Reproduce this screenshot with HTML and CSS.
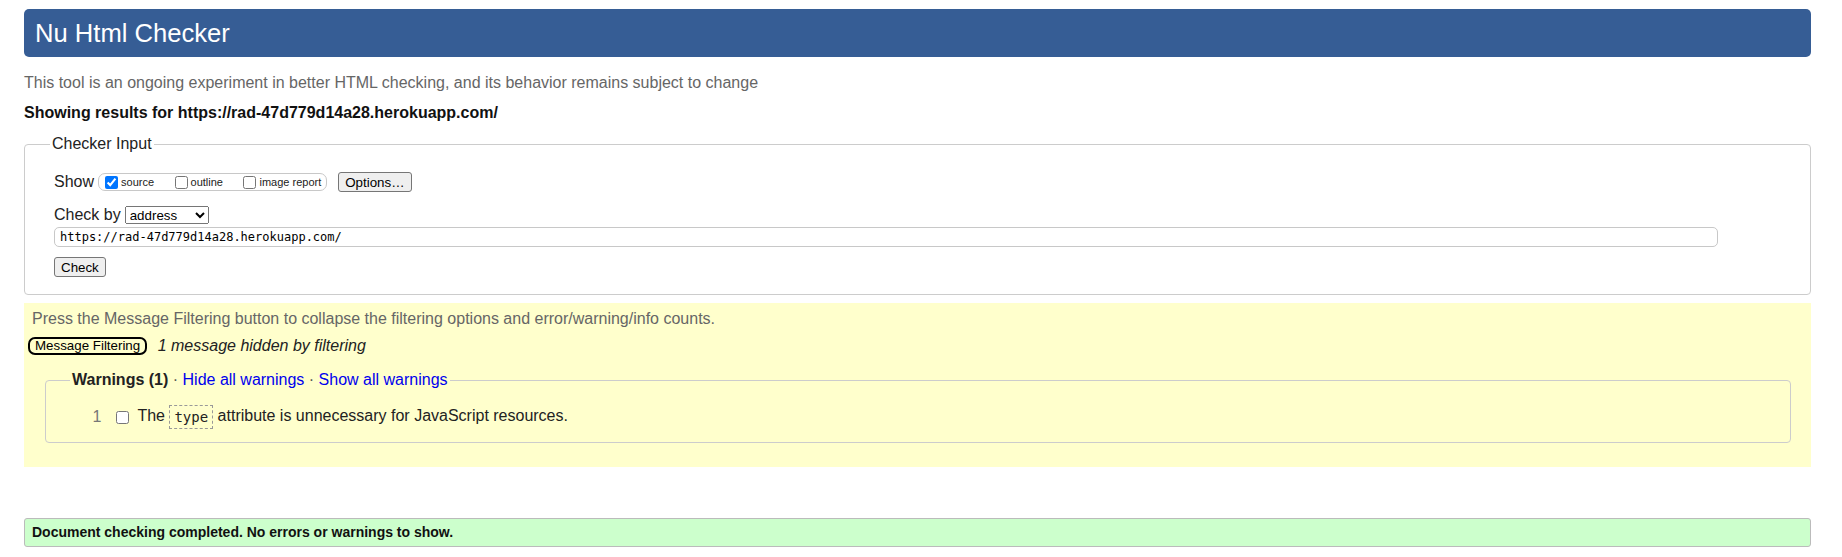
FILE: index.html
```html
<!DOCTYPE html>
<html lang="en">
<head>
<meta charset="utf-8">
<title>Nu Html Checker</title>
<link rel="stylesheet" href="styles.css">
</head>
<body>
<h1 class="title">Nu Html Checker</h1>
<p class="subtitle">This tool is an ongoing experiment in better HTML checking, and its behavior remains subject to change</p>
<p class="showing">Showing results for https://rad-47d779d14a28.herokuapp.com/</p>
<form class="checker">
  <fieldset class="input-box">
    <legend class="input-legend">Checker Input</legend>
    <div class="row row-show">
      <span class="lbl">Show</span>
      <span class="opts">
        <label class="opt"><input class="cb" type="checkbox" checked>source</label>
        <label class="opt opt-gap"><input class="cb" type="checkbox">outline</label>
        <label class="opt opt-gap"><input class="cb" type="checkbox">image report</label>
      </span>
      <button type="button" class="btn btn-options">Options…</button>
    </div>
    <div class="row row-by">
      <span class="lbl">Check by</span>
      <select class="sel"><option>address</option><option>file upload</option><option>text input</option></select>
    </div>
    <div class="row row-url"><input class="url" type="text" value="https://rad-47d779d14a28.herokuapp.com/"></div>
    <div class="row row-check"><button class="btn" type="button">Check</button></div>
  </fieldset>
</form>
<section class="filters">
  <p class="filter-note">Press the Message Filtering button to collapse the filtering options and error/warning/info counts.</p>
  <div class="filter-row"><button type="button" class="btn-filter">Message Filtering</button><em class="hidden-note">1 message hidden by filtering</em></div>
  <fieldset class="warn-box">
    <legend class="warn-legend"><strong>Warnings (1)</strong> <span class="dot">·</span> <a class="lnk" href="#">Hide all warnings</a> <span class="dot">·</span> <a class="lnk" href="#">Show all warnings</a></legend>
    <div class="msg"><span class="num">1</span><input class="cb" type="checkbox"><span class="msg-text">The <code class="code">type</code> attribute is unnecessary for JavaScript resources.</span></div>
  </fieldset>
</section>
<p class="done">Document checking completed. No errors or warnings to show.</p>
</body>
</html>
```
FILE: styles.css
```css
html { background: #fff; }
body {
  margin: 0;
  padding: 9px 31px 0 24px;
  font-family: "Liberation Sans", Arial, sans-serif;
  font-size: 16px;
  color: #222;
}
.title {
  margin: 0;
  height: 48px;
  line-height: 48px;
  padding-left: 11px;
  background: #365d95;
  color: #fff;
  border-radius: 5px;
  font-size: 25.6px;
  font-weight: normal;
}
.subtitle {
  margin: 17px 0 0;
  line-height: 18px;
  color: #666;
}
.showing {
  margin: 12px 0 0;
  line-height: 18px;
  font-weight: bold;
  color: #111;
}
.checker { margin: 13px 0 0; }
.input-box {
  margin: 0;
  border: 1px solid #ccc;
  border-radius: 4px;
  padding: 0 29px 17px;
  min-inline-size: 0;
}
.input-legend {
  padding: 0 2px;
  margin-left: -4px;
  line-height: 18px;
  color: #222;
}
.row {
  display: flex;
  align-items: center;
}
.row-show { margin-top: 19px; height: 20px; }
.row-by { margin-top: 13px; height: 19px; }
.row-url { margin-top: 3px; height: 20px; }
.row-check { margin-top: 10px; height: 20px; }
.lbl { line-height: 18px; }
.opts {
  display: inline-flex;
  align-items: center;
  box-sizing: border-box;
  height: 18px;
  margin-left: 4px;
  padding: 0 5px 0 2px;
  border: 1px solid #c8c8c8;
  border-radius: 7px;
}
.opt {
  display: inline-flex;
  align-items: center;
  font-size: 11px;
  line-height: 13px;
}
.opt-gap { margin-left: 16.5px; }
.cb {
  width: 13px;
  height: 13px;
  margin: 0 3px 0 4px;
}
.btn {
  box-sizing: border-box;
  height: 20px;
  padding: 0 6px;
  font-family: "Liberation Sans", Arial, sans-serif;
  font-size: 13.333px;
  color: #000;
  background: #efefef;
  border: 1px solid #767676;
  border-radius: 3px;
}
.btn-options { margin-left: 11px; }
.sel {
  box-sizing: border-box;
  width: 84px;
  height: 18px;
  margin-left: 4px;
  font-family: "Liberation Sans", Arial, sans-serif;
  font-size: 13.333px;
  color: #000;
}
.url {
  box-sizing: border-box;
  width: 1664px;
  height: 20px;
  margin: 0;
  padding: 0 5px;
  border: 1px solid #c8c8c8;
  border-radius: 5px;
  font-family: "DejaVu Sans Mono", "Liberation Mono", monospace;
  font-size: 12px;
  color: #000;
  background: #fff;
}
.filters {
  margin-top: 8px;
  background: #ffffcc;
  padding: 7px 8px 24px;
}
.filter-note {
  margin: 0;
  line-height: 18px;
  color: #666;
}
.filter-row {
  display: flex;
  align-items: center;
  margin-top: 9px;
  height: 18px;
}
.btn-filter {
  box-sizing: border-box;
  height: 18px;
  margin-left: -4px;
  padding: 0 5px;
  border: 2px solid #000;
  border-radius: 7px;
  background: transparent;
  font-family: "Liberation Sans", Arial, sans-serif;
  font-size: 13.333px;
  line-height: 14px;
  color: #000;
}
.hidden-note {
  margin-left: 10.5px;
  line-height: 18px;
  color: #222;
}
.warn-box {
  margin: 16px 12px 0 13px;
  border: 1px solid #ccc;
  border-radius: 4px;
  padding: 0 24px 13px;
  min-inline-size: 0;
}
.warn-legend {
  padding: 0 2px;
  line-height: 18px;
}
.warn-legend strong { color: #222; }
.dot { color: #555; }
.lnk { color: #0000ee; text-decoration: none; }
.msg {
  display: flex;
  align-items: center;
  margin-top: 16px;
  height: 24px;
  padding-left: 22.5px;
}
.num { color: #777; margin-right: 11px; line-height: 18px; }
.msg-text { margin-left: 5px; line-height: 18px; color: #222; }
.code {
  display: inline-block;
  padding: 2px 4px;
  border: 1px dashed #999;
  font-family: "DejaVu Sans Mono", "Liberation Mono", monospace;
  font-size: 14px;
  line-height: 18px;
  vertical-align: middle;
}
.done {
  margin: 51px 0 0;
  box-sizing: border-box;
  height: 29px;
  line-height: 27px;
  padding: 0 8px 0 7px;
  border: 1px solid #bbb;
  border-radius: 3px;
  background: #ccffcc;
  font-size: 14px;
  font-weight: bold;
  color: #111;
}
```
